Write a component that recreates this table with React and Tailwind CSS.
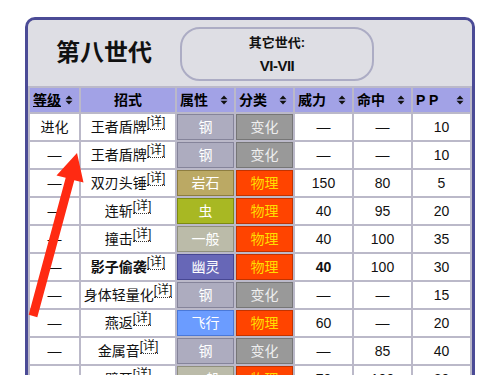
import React from 'react'

const TYPE_STYLES = {
  钢: 'bg-[#adacbf] border-[#85849a]',
  岩石: 'bg-[#bba964] border-[#8e7d40]',
  虫: 'bg-[#a8b823] border-[#7d8a12]',
  一般: 'bg-[#bbbba9] border-[#8f8f7c]',
  幽灵: 'bg-[#6767b7] border-[#474793]',
  飞行: 'bg-[#6b9cff] border-[#4a78d8]',
}

const CAT_STYLES = {
  变化: 'bg-[#999999] border-[#767676] text-[#eeeeee]',
  物理: 'bg-[#ff4400] border-[#c23300] text-[#ffdd00]',
}

const moves = [
  { lv: '进化', name: '王者盾牌', type: '钢', cat: '变化', pow: '—', acc: '—', pp: '10' },
  { lv: '—', name: '王者盾牌', type: '钢', cat: '变化', pow: '—', acc: '—', pp: '10' },
  { lv: '—', name: '双刃头锤', type: '岩石', cat: '物理', pow: '150', acc: '80', pp: '5' },
  { lv: '—', name: '连斩', type: '虫', cat: '物理', pow: '40', acc: '95', pp: '20' },
  { lv: '—', name: '撞击', type: '一般', cat: '物理', pow: '40', acc: '100', pp: '35' },
  { lv: '—', name: '影子偷袭', type: '幽灵', cat: '物理', pow: '40', acc: '100', pp: '30', stab: true },
  { lv: '—', name: '身体轻量化', type: '钢', cat: '变化', pow: '—', acc: '—', pp: '15' },
  { lv: '—', name: '燕返', type: '飞行', cat: '物理', pow: '60', acc: '—', pp: '20' },
  { lv: '—', name: '金属音', type: '钢', cat: '变化', pow: '—', acc: '85', pp: '40' },
  { lv: '—', name: '劈开', type: '一般', cat: '物理', pow: '70', acc: '100', pp: '20' },
]

function SortIcon() {
  return (
    <svg width="8" height="10" viewBox="0 0 8 10" className="shrink-0">
      <path d="M4 0.5 L7.5 4.2 H0.5 Z M4 9.5 L7.5 5.8 H0.5 Z" fill="#111" />
    </svg>
  )
}

function HeadCell({ label, sort = true, underline = false, center = false }) {
  return (
    <th className="h-[24px] p-0 bg-[#a2a2e6] font-bold text-[14px] text-black">
      <div className={`flex items-center h-full ${center ? 'justify-center' : 'justify-between pl-[3px] pr-[6px]'}`}>
        <span className={underline ? 'underline' : ''}>{label}</span>
        {sort && <SortIcon />}
      </div>
    </th>
  )
}

function Arrow() {
  return (
    <svg className="absolute left-0 top-0 pointer-events-none" width="120" height="340" viewBox="0 0 120 340">
      <polygon
        points="28.7,314.8 37.3,317.2 74.3,180.2 83.5,182.6 77,153 56.5,175.4 65.7,177.8"
        fill="#ff2a12"
      />
    </svg>
  )
}

export default function App() {
  return (
    <div className="relative min-h-[375px] bg-white pl-[25px] pt-[17px]" style={{ fontFamily: '"Liberation Sans", "Noto Sans CJK SC", sans-serif' }}>
      <div className="w-[450px] border-[3px] border-b-0 border-[#4b4b96] rounded-t-[10px] bg-[#bbb9c9] overflow-hidden">
        <div className="h-[66px] bg-[#dedee4] flex items-start">
          <div className="w-[152px] h-full flex items-center justify-center text-[24px] font-bold text-[#111]">
            第八世代
          </div>
          <div className="mt-[7px] w-[194px] h-[54px] border-2 border-[#acacc4] rounded-[20px] flex flex-col items-center justify-center gap-[9px] font-bold text-[#111]">
            <span className="leading-none text-[13px]">其它世代:</span>
            <span className="leading-none text-[15px] tracking-[-0.5px]">VI-VII</span>
          </div>
        </div>
        <table className="table-fixed border-separate border-spacing-[2px] w-[444px] text-[14px] text-[#111]">
          <colgroup>
            <col className="w-[49px]" />
            <col className="w-[94px]" />
            <col className="w-[57px]" />
            <col className="w-[57px]" />
            <col className="w-[57px]" />
            <col className="w-[57px]" />
            <col className="w-[57px]" />
          </colgroup>
          <thead>
            <tr>
              <HeadCell label="等级" underline />
              <HeadCell label="招式" sort={false} center />
              <HeadCell label="属性" />
              <HeadCell label="分类" />
              <HeadCell label="威力" />
              <HeadCell label="命中" />
              <HeadCell label="P P" />
            </tr>
          </thead>
          <tbody>
            {moves.map((m, i) => (
              <tr key={i}>
                <td className="h-[26px] p-0 bg-white text-center">{m.lv}</td>
                <td className={`h-[26px] p-0 bg-white text-center whitespace-nowrap ${m.stab ? 'font-bold' : ''}`}>
                  {m.name}
                  <sup className="text-[12px] font-normal top-[-6px] border-b border-dotted border-[#333] leading-none">[详]</sup>
                </td>
                <td className="h-[26px] p-0">
                  <div className={`h-[26px] border flex items-center justify-center text-white ${TYPE_STYLES[m.type]}`}>{m.type}</div>
                </td>
                <td className="h-[26px] p-0">
                  <div className={`h-[26px] border flex items-center justify-center ${CAT_STYLES[m.cat]}`}>{m.cat}</div>
                </td>
                <td className={`h-[26px] p-0 bg-white text-center ${m.stab ? 'font-bold' : ''}`}>{m.pow}</td>
                <td className="h-[26px] p-0 bg-white text-center">{m.acc}</td>
                <td className="h-[26px] p-0 bg-white text-center">{m.pp}</td>
              </tr>
            ))}
          </tbody>
        </table>
      </div>
      <Arrow />
    </div>
  )
}
